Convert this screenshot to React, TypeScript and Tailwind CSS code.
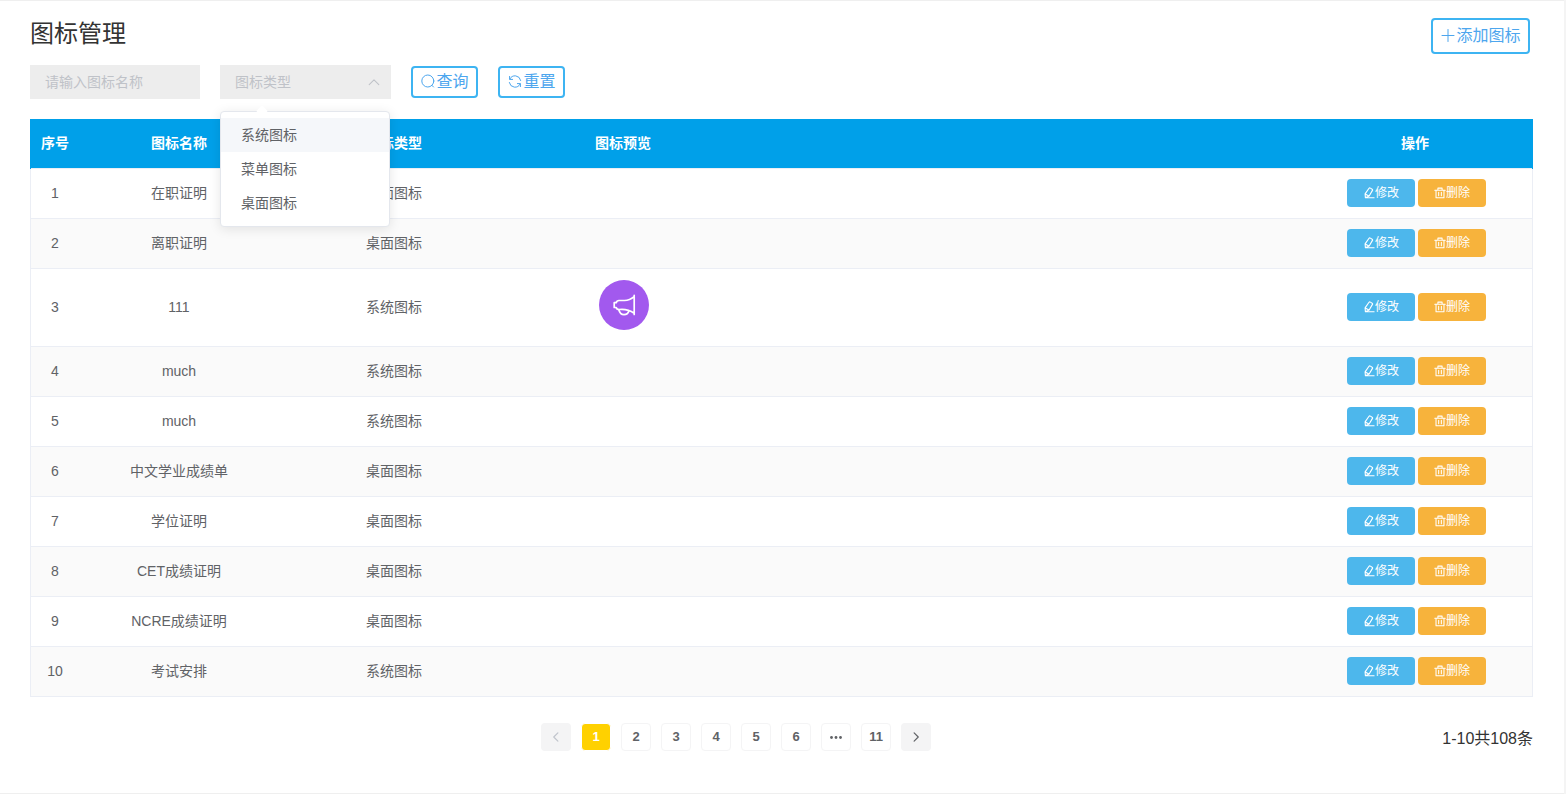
import React, { useState } from "react";

type Row = { id: number; name: string; type: string; icon?: boolean };

const rows: Row[] = [
  { id: 1, name: "在职证明", type: "桌面图标" },
  { id: 2, name: "离职证明", type: "桌面图标" },
  { id: 3, name: "111", type: "系统图标", icon: true },
  { id: 4, name: "much", type: "系统图标" },
  { id: 5, name: "much", type: "系统图标" },
  { id: 6, name: "中文学业成绩单", type: "桌面图标" },
  { id: 7, name: "学位证明", type: "桌面图标" },
  { id: 8, name: "CET成绩证明", type: "桌面图标" },
  { id: 9, name: "NCRE成绩证明", type: "桌面图标" },
  { id: 10, name: "考试安排", type: "系统图标" },
];

const iconTypes = ["系统图标", "菜单图标", "桌面图标"];
const pages = ["1", "2", "3", "4", "5", "6", "more", "11"];

function Icon({ className, children }: { className: string; children: React.ReactNode }) {
  return (
    <svg
      viewBox="0 0 16 16"
      className={className}
      fill="none"
      stroke="currentColor"
      strokeLinecap="round"
      strokeLinejoin="round"
      aria-hidden="true"
    >
      {children}
    </svg>
  );
}

const PlusIcon = () => (
  <Icon className="size-4">
    <path d="M8 1.500v12M2 7.500h12" />
  </Icon>
);

const SearchIcon = () => (
  <Icon className="size-4">
    <circle cx="7.8" cy="7" r="6" />
    <path d="M12 11.400l1.500 1.600" />
  </Icon>
);

const RefreshIcon = () => (
  <Icon className="size-4">
    <path d="M2.6 2.4v3h3M2.8 5.100A5.8 5.8 0 0 1 13.7 6.500" />
    <path d="M13.4 12.600v-3h-3M13.2 9.900A5.8 5.8 0 0 1 2.3 8.500" />
  </Icon>
);

const EditIcon = () => (
  <Icon className="size-3">
    <path
      strokeWidth="1.5"
      d="M9.800 1.500l2.400 1.400c.6.400.8 1 .4 1.600L8.200 12 3.200 14.300 2.800 9.200 7.800 2c.5-.7 1.300-.9 2-.5zM3 9.400l4.800 2.600M3.200 14.300h11.600"
    />
  </Icon>
);

const TrashIcon = () => (
  <Icon className="size-3">
    <path
      strokeWidth="1.4"
      d="M1 4.200h14M5.200 4V1.500h5.600V4M2.700 4.200v10.200h10.600V4.200M6.200 7v4.500M9.800 7v4.500"
    />
  </Icon>
);

function MegaphoneIcon() {
  return (
    <svg viewBox="0 0 50 50" className="inline-block size-[50px] align-baseline" role="img" aria-label="喇叭">
      <circle cx="25" cy="25" r="25" fill="#a259ee" />
      <g fill="none" stroke="#fff" strokeWidth="1.7" strokeLinecap="round" strokeLinejoin="round">
        <path d="M35.200 15.300v19.200M35.200 16.600C32 19.300 29 20.500 25.500 20.500h-5.500c-1.500 0-2.500.9-2.800 2.200h-2v4.800h2c.3 1.200 1.300 2 2.800 2 6.500-.8 11 .8 15.200 3.700" />
        <path d="M19.800 29.700c.8 3 2.700 4.900 5.200 4.900 2.400 0 4.200-1.100 4.900-3.600" />
      </g>
    </svg>
  );
}

const outlineButton =
  "flex items-center justify-center rounded border-2 border-[#3db4f2] bg-white text-base leading-5 text-[#4da6ee]";

export default function App() {
  const [name, setName] = useState("");
  const [type, setType] = useState("");
  const [open, setOpen] = useState(true);

  return (
    <div className="bg-[#f4f4f4] pr-0.5 font-['Liberation_Sans','Noto_Sans_CJK_SC',sans-serif] text-sm text-[#606266]">
      <main className="border-y border-[#efefef] bg-white pr-[31px] pb-10 pl-[30px] pt-[17px]">
        <header className="flex items-start justify-between pr-[3px]">
          <h1 className="text-2xl leading-8 text-[#333]">图标管理</h1>
          <button type="button" className={`${outlineButton} h-9 w-[99px]`}>
            <PlusIcon />
            添加图标
          </button>
        </header>

        <form className="mt-[11px] flex items-center gap-5" onSubmit={(e) => e.preventDefault()}>
          <input
            type="text"
            aria-label="图标名称"
            placeholder="请输入图标名称"
            value={name}
            onChange={(e) => setName(e.target.value)}
            className="h-[34px] w-[170px] bg-[#ededed] px-[15px] outline-none placeholder:text-[#bfc2c8]"
          />
          <div className="relative w-[171px]">
            <select
              aria-label="图标类型"
              value={type}
              onChange={(e) => setType(e.target.value)}
              className="block h-[34px] w-full appearance-none bg-[#ededed] px-[15px] text-[#bfc2c8] outline-none"
            >
              <option value="">图标类型</option>
              {iconTypes.map((t) => (
                <option key={t}>{t}</option>
              ))}
            </select>
            <Icon className="pointer-events-none absolute right-[10px] top-[10px] size-[14px] text-[#bfc2c8]">
              <path strokeWidth="1.2" d="M2.500 11L8 5.500 13.500 11" />
            </Icon>
            {open && (
              <div className="absolute left-0 top-[46px] z-10 w-[170px] rounded border border-[#e4e7ed] bg-white py-1.5 shadow-[0_2px_12px_rgba(0,0,0,0.1)]">
                <span className="absolute -top-[5px] left-[37px] size-2 rotate-45 bg-white" />
                <ul>
                  {iconTypes.map((t, i) => (
                    <li key={t}>
                      <button
                        type="button"
                        onClick={() => {
                          setType(t);
                          setOpen(false);
                        }}
                        className={`relative block h-[34px] w-full px-5 text-left hover:bg-[#f5f7fa] ${i === 0 ? "bg-[#f5f7fa]" : ""}`}
                      >
                        {t}
                      </button>
                    </li>
                  ))}
                </ul>
              </div>
            )}
          </div>
          <button type="submit" className={`${outlineButton} h-8 w-[67px]`}>
            <SearchIcon />
            查询
          </button>
          <button type="reset" className={`${outlineButton} h-8 w-[67px]`}>
            <RefreshIcon />
            重置
          </button>
        </form>

        <table className="mt-5 w-full table-fixed border-separate border-spacing-0 border-x border-[#ebeef5] text-center">
          <colgroup>
            <col className="w-12" />
            <col className="w-[200px]" />
            <col className="w-[230px]" />
            <col />
            <col className="w-[234px]" />
          </colgroup>
          <thead className="text-white [&_th]:border-b [&_th]:border-[#ebeef5] [&_th]:bg-clip-padding [&_th]:bg-[#00a0e9] [&_th]:pb-0.5">
            <tr className="h-[50px]">
              <th className="shadow-[-1px_0_#00a0e9]">序号</th>
              <th>图标名称</th>
              <th>图标类型</th>
              <th>
                <div className="w-[228px]">图标预览</div>
              </th>
              <th className="shadow-[1px_0_#00a0e9]">操作</th>
            </tr>
          </thead>
          <tbody className="[&_td]:border-b [&_td]:border-[#ebeef5] [&_td]:pb-px">
            {rows.map((row) => (
              <tr key={row.id} className={`even:bg-[#fafafa] ${row.icon ? "h-[78px]" : "h-[50px]"}`}>
                <td>{row.id}</td>
                <td>{row.name}</td>
                <td>{row.type}</td>
                <td>
                  {row.icon && (
                    <div className="w-[230px]">
                      <MegaphoneIcon />
                    </div>
                  )}
                </td>
                <td>
                  <div className="flex justify-center gap-[3px] pl-[3px] text-xs text-white">
                    <button
                      type="button"
                      className="flex h-7 w-[68px] items-center justify-center rounded bg-[#4db7ec]"
                    >
                      <EditIcon />
                      修改
                    </button>
                    <button
                      type="button"
                      className="flex h-7 w-[68px] items-center justify-center rounded bg-[#f7b33c]"
                    >
                      <TrashIcon />
                      删除
                    </button>
                  </div>
                </td>
              </tr>
            ))}
          </tbody>
        </table>

        <footer className="mt-[26px] flex items-start">
          <nav aria-label="分页" className="flex flex-1 justify-center gap-2.5 text-[13px] font-bold">
            <button
              type="button"
              disabled
              aria-label="上一页"
              className="flex h-7 w-[30px] items-center justify-center rounded-sm bg-[#f4f4f5] text-[#c0c4cc]"
            >
              <Icon className="size-3">
                <path strokeWidth="1.600" d="M10.500 2.500L5 8l5.500 5.500" />
              </Icon>
            </button>
            {pages.map((p) => (
              <button
                key={p}
                type="button"
                aria-label={p === "more" ? "更多页" : undefined}
                className={`flex h-7 w-[30px] items-center justify-center rounded-sm border ${
                  p === "1" ? "border-white bg-[#ffd100] text-white" : "border-[#f4f4f5] bg-white"
                }`}
              >
                {p === "more" ? (
                  <svg viewBox="0 0 12 12" className="size-3" fill="currentColor" aria-hidden="true">
                    <circle cx="1.500" cy="6.500" r="1.400" />
                    <circle cx="6" cy="6.500" r="1.400" />
                    <circle cx="10.500" cy="6.500" r="1.400" />
                  </svg>
                ) : (
                  p
                )}
              </button>
            ))}
            <button
              type="button"
              aria-label="下一页"
              className="flex h-7 w-[30px] items-center justify-center rounded-sm bg-[#f4f4f5]"
            >
              <Icon className="size-3">
                <path strokeWidth="1.600" d="M5.500 2.500L11 8l-5.500 5.500" />
              </Icon>
            </button>
          </nav>
          <p className="pt-0.5 text-base leading-7 text-[#333]">1-10共108条</p>
        </footer>
      </main>
    </div>
  );
}
